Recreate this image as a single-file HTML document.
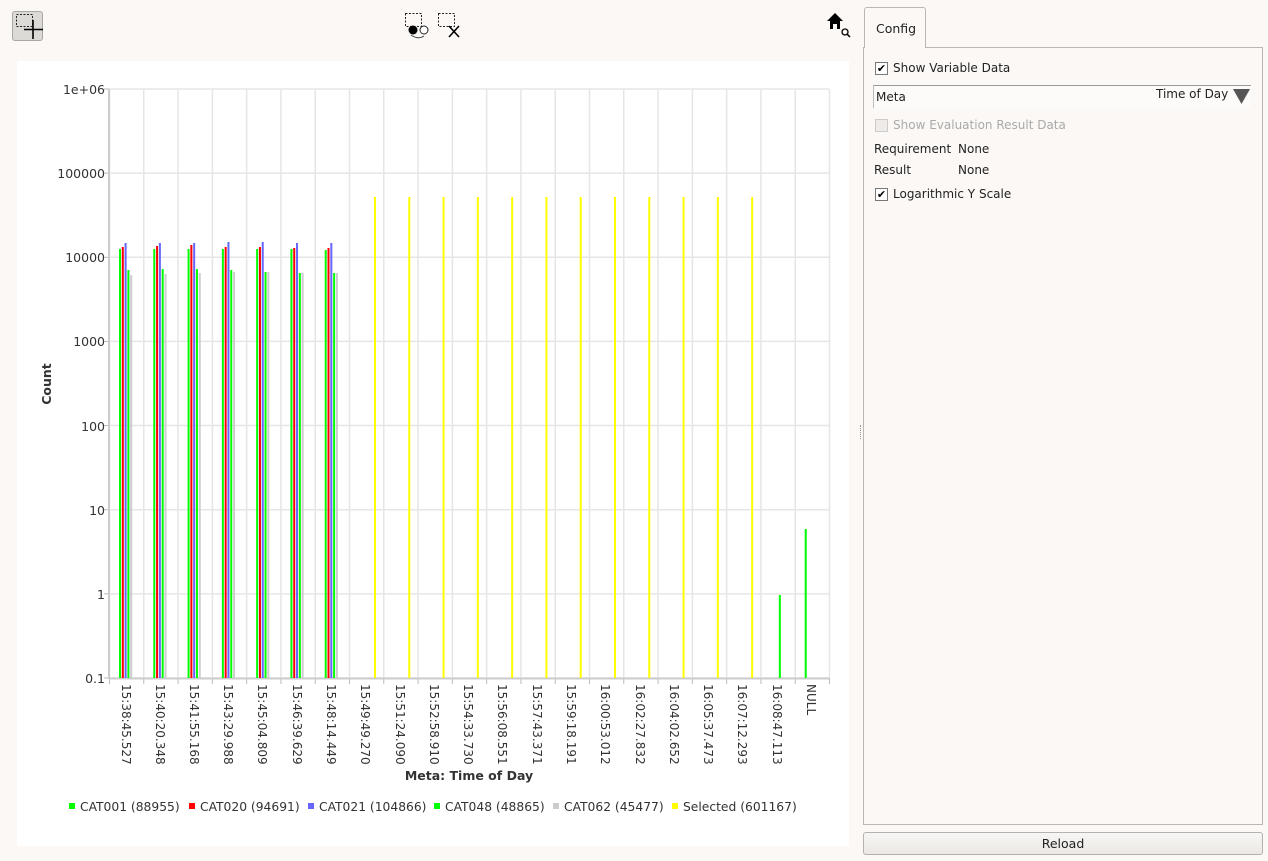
<!DOCTYPE html>
<html><head><meta charset="utf-8">
<style>
body{margin:0;width:1268px;height:861px;background:#fcf8f5;font-family:"DejaVu Sans","Liberation Sans",sans-serif;font-size:12px;color:#222;position:relative;overflow:hidden}
.abs{position:absolute}
.btn{left:12px;top:11px;width:31px;height:30px;border:1px solid #a9a6a3;border-radius:3px;background:#dcdad7;box-sizing:border-box}
.tab{left:864px;top:7px;width:62px;height:41px;border:1px solid #b9b6b3;border-bottom:none;border-radius:3px 3px 0 0;background:#fcf8f5;box-sizing:border-box;z-index:2;padding:13px 0 0 11px;font-size:12.5px}
.pane{left:863px;top:47px;width:400px;height:778px;border:1px solid #b9b6b3;box-sizing:border-box}
.cb{width:13px;height:13px;border:1px solid #777;background:#fff;box-sizing:border-box;font-size:11px;line-height:11px;text-align:center;font-weight:bold;color:#000}
.lbl{font-size:12px}
.reload{left:863px;top:832px;width:400px;height:23px;border:1px solid #b4b1ae;border-radius:3px;background:linear-gradient(#f8f6f4,#ebe8e5);box-sizing:border-box;text-align:center;line-height:21px;font-size:12.5px}
</style></head><body>
<div class="abs btn"><svg width="31" height="30" style="position:absolute;left:-1px;top:-1px"><rect x="4.5" y="3.5" width="16" height="12" fill="none" stroke="#222" stroke-dasharray="2,1.5"/><path d="M21 9v19M12 18.5h19" stroke="#000" stroke-width="1.6"/></svg></div>
<svg class="abs" style="left:403px;top:12px" width="62" height="28"><rect x="2.5" y="1.5" width="16" height="13" fill="none" stroke="#222" stroke-dasharray="2,1.5"/><circle cx="10" cy="18" r="4.5" fill="#000"/><circle cx="21" cy="18" r="4" fill="#fff" stroke="#222"/><path d="M8 23q7 5 13 1" fill="none" stroke="#444"/><rect x="35.5" y="1.5" width="16" height="13" fill="none" stroke="#222" stroke-dasharray="2,1.5"/><path d="M46 14l10 11M56 14l-10 11" stroke="#000" stroke-width="1.6"/></svg>
<svg class="abs" style="left:826px;top:12px" width="26" height="28"><path d="M1 9L9 1l8 8h-3v8h-3v-5H7v5H4V9z" fill="#000"/><circle cx="19" cy="20" r="3" fill="none" stroke="#000" stroke-width="1.3"/><path d="M21 22l3 3" stroke="#000" stroke-width="1.5"/></svg>

<div class="abs" style="left:17px;top:61px;width:832px;height:785px;background:#fff"></div>
<svg class="abs" style="left:0;top:0" width="860" height="861" id="ch">
<g id="grid"></g>
<g font-size="12.5" fill="#333" text-anchor="end">
<text x="105" y="94">1e+06</text><text x="105" y="178">100000</text><text x="105" y="262">10000</text><text x="105" y="346">1000</text><text x="105" y="431">100</text><text x="105" y="515">10</text><text x="105" y="599">1</text><text x="105" y="683">0.1</text>
</g>
<text transform="translate(51,384) rotate(-90)" text-anchor="middle" font-weight="bold" font-size="12.5" fill="#333">Count</text>
<g font-size="12" fill="#333" id="xl">
<text transform="translate(122,684) rotate(90)">15:38:45.527</text>
<text transform="translate(156,684) rotate(90)">15:40:20.348</text>
<text transform="translate(190,684) rotate(90)">15:41:55.168</text>
<text transform="translate(224,684) rotate(90)">15:43:29.988</text>
<text transform="translate(258,684) rotate(90)">15:45:04.809</text>
<text transform="translate(293,684) rotate(90)">15:46:39.629</text>
<text transform="translate(327,684) rotate(90)">15:48:14.449</text>
<text transform="translate(361,684) rotate(90)">15:49:49.270</text>
<text transform="translate(396,684) rotate(90)">15:51:24.090</text>
<text transform="translate(430,684) rotate(90)">15:52:58.910</text>
<text transform="translate(464,684) rotate(90)">15:54:33.730</text>
<text transform="translate(498,684) rotate(90)">15:56:08.551</text>
<text transform="translate(533,684) rotate(90)">15:57:43.371</text>
<text transform="translate(567,684) rotate(90)">15:59:18.191</text>
<text transform="translate(601,684) rotate(90)">16:00:53.012</text>
<text transform="translate(636,684) rotate(90)">16:02:27.832</text>
<text transform="translate(670,684) rotate(90)">16:04:02.652</text>
<text transform="translate(704,684) rotate(90)">16:05:37.473</text>
<text transform="translate(738,684) rotate(90)">16:07:12.293</text>
<text transform="translate(773,684) rotate(90)">16:08:47.113</text>
<text transform="translate(807,684) rotate(90)">NULL</text>
</g>
<text x="469" y="780" text-anchor="middle" font-weight="bold" font-size="12.5" fill="#333">Meta: Time of Day</text>
<g font-size="12.3" fill="#333">
<rect x="69" y="803" width="6" height="6" fill="#0f0"/><text x="80" y="811">CAT001 (88955)</text>
<rect x="189" y="803" width="6" height="6" fill="#f00"/><text x="200" y="811">CAT020 (94691)</text>
<rect x="308" y="803" width="6" height="6" fill="#66f"/><text x="319" y="811">CAT021 (104866)</text>
<rect x="434" y="803" width="6" height="6" fill="#0f0"/><text x="445" y="811">CAT048 (48865)</text>
<rect x="553" y="803" width="6" height="6" fill="#ccc"/><text x="564" y="811">CAT062 (45477)</text>
<rect x="672" y="803" width="6" height="6" fill="#ff0"/><text x="683" y="811">Selected (601167)</text>
</g>
<g id="bars"></g>
</svg>
<script>
var NS="http://www.w3.org/2000/svg",g=document.getElementById('grid'),b=document.getElementById('bars');
function el(p,t,a){var e=document.createElementNS(NS,t);for(var k in a)e.setAttribute(k,a[k]);p.appendChild(e);}
var w=720/21;
for(var i=0;i<8;i++){var y=89+i*84.14;el(g,'line',{x1:109,x2:829,y1:y,y2:y,stroke:'#e6e6e6','stroke-width':1.5});el(g,'line',{x1:104,x2:109,y1:y,y2:y,stroke:'#bbb'});}
for(var i=0;i<=21;i++){var x=109.5+i*w;el(g,'line',{x1:x,x2:x,y1:89,y2:678,stroke:'#e6e6e6','stroke-width':1.5});el(g,'line',{x1:x,x2:x,y1:678,y2:684,stroke:'#bbb'});}
el(g,'line',{x1:109,x2:109,y1:89,y2:679,stroke:'#ccc','stroke-width':2});
el(g,'line',{x1:109,x2:829,y1:678.5,y2:678.5,stroke:'#ccc','stroke-width':2});
var cols=['#0f0','#f00','#66f','#0f0','#ccc','#ff0'];
var tops=[[249,247,243,270,275],[249,246,243,269,274],[249,245,243,269,273],[249,247,242,270,272],[249,247,242,272,272],[249,248,243,273,273],[250,248,243,273,273]];
function bar(c,s,top){var x=109.5+c*w+9.5+s*2.8;if(s==5)x+=1;el(b,'rect',{x:x,y:top,width:2,height:678-top,fill:cols[s]});}
tops.forEach(function(t,c){t.forEach(function(v,s){bar(c,s,v);});});
for(var c=7;c<19;c++)bar(c,5,197);
bar(19,3,595);bar(20,0,529);
</script>

<div class="abs tab">Config</div>
<div class="abs pane"></div>
<div class="abs cb" style="left:875px;top:62px">✔</div><div class="abs lbl" style="left:893px;top:61px">Show Variable Data</div>
<div class="abs" style="left:873px;top:85px;width:377px;height:22px;border-top:1px solid #999;border-left:1px solid #bbb;background:#fdfbf9"></div>
<div class="abs lbl" style="left:876px;top:90px">Meta</div>
<div class="abs lbl" style="left:1156px;top:87px">Time of Day</div>
<svg class="abs" style="left:1233px;top:89px" width="17" height="16"><path d="M0 0h17L8.5 15z" fill="#555"/></svg>
<div class="abs cb" style="left:875px;top:119px;border-color:#ccc;background:#eeebe8"></div><div class="abs lbl" style="left:893px;top:118px;color:#aaa">Show Evaluation Result Data</div>
<div class="abs lbl" style="left:874px;top:142px">Requirement</div><div class="abs lbl" style="left:958px;top:142px">None</div>
<div class="abs lbl" style="left:874px;top:163px">Result</div><div class="abs lbl" style="left:958px;top:163px">None</div>
<div class="abs cb" style="left:875px;top:188px">✔</div><div class="abs lbl" style="left:893px;top:187px">Logarithmic Y Scale</div>
<div class="abs" style="left:860px;top:425px;width:1px;height:14px;border-left:1px dotted #999"></div>
<div class="abs reload">Reload</div>
</body></html>
